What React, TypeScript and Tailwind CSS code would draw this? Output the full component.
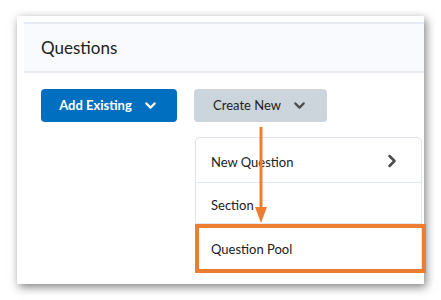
import React from 'react'
import { ChevronDown, ChevronRight } from 'lucide-react'

const font = { fontFamily: 'Lato, "Open Sans", sans-serif' }

export default function App() {
  return (
    <div className="relative w-[441px] h-[300px] bg-white overflow-hidden" style={font}>
      {/* Screenshot card */}
      <div className="absolute left-[17px] top-[16px] w-[407px] h-[268px] bg-white shadow-[2px_3px_9px_rgba(0,0,0,0.5)] overflow-hidden">
        <div className="pl-[7px] pt-[6px]">
          <div className="h-[51px] border-t-2 border-b-2 border-[#e6ebf1] bg-[#f9fafe] flex items-center pl-[17px]">
            <h2 className="text-[17px] text-[#202122] pt-[1px]">Questions</h2>
          </div>

          <div className="flex gap-[17px] pl-[17px] mt-[16px]">
            <button className="w-[136px] h-[33px] rounded-[4px] bg-[#006fbf] text-white text-[13px] font-bold flex items-center justify-center gap-[10px]">
              <span>Add Existing</span>
              <ChevronDown className="w-[17px] h-[17px]" strokeWidth={3} />
            </button>
            <button className="w-[133px] h-[33px] rounded-[4px] bg-[#cdd5dc] text-[#202122] text-[13px] flex items-center justify-center gap-[10px]">
              <span>Create New</span>
              <ChevronDown className="w-[17px] h-[17px] text-[#494c4e]" strokeWidth={3} />
            </button>
          </div>
        </div>

        {/* Dropdown menu */}
        <div className="absolute left-[178px] top-[121px] w-[227px] h-[135px] bg-white border border-[#dfe4ea] rounded-[5px] text-[13px] text-[#202122]">
          <div className="h-[45px] flex items-center justify-between pl-[15px] pr-[19px] pt-[6px] border-b border-[#e3e9f1]">
            <span>New Question</span>
            <ChevronRight className="w-[20px] h-[20px] text-[#494c4e] -mt-[4px]" strokeWidth={3} />
          </div>
          <div className="h-[41px] flex items-center pl-[15px] pt-[5px] border-b border-[#e3e9f1]">
            <span>Section</span>
          </div>
          <div className="h-[46px] flex items-center pl-[15px] pt-[5px]">
            <span>Question Pool</span>
          </div>
        </div>
      </div>

      {/* Annotation: highlight box */}
      <div className="absolute left-[195px] top-[224px] w-[231px] h-[49px] border-4 border-[#ed7d31]" />

      {/* Annotation: arrow */}
      <svg className="absolute left-[254px] top-[127px]" width="14" height="97" viewBox="0 0 14 97">
        <rect x="5.5" y="0" width="3" height="84" fill="#ed7d31" />
        <polygon points="1,80 13,80 7,96" fill="#ed7d31" />
      </svg>
    </div>
  )
}
